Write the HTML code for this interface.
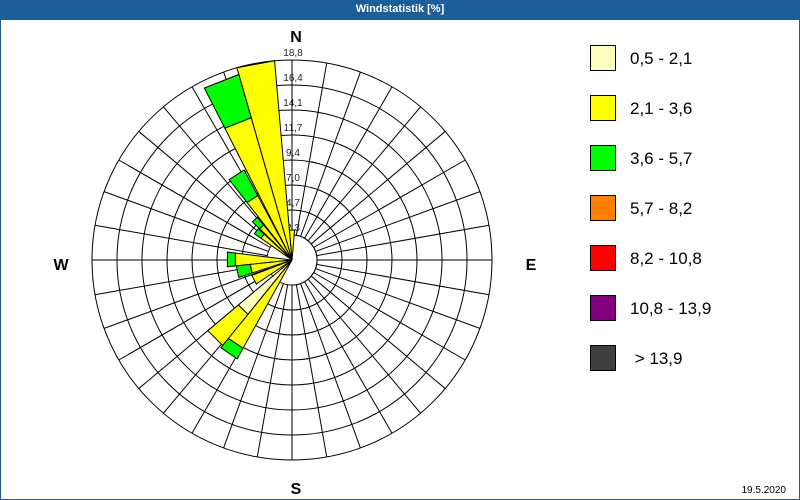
<!DOCTYPE html>
<html><head><meta charset="utf-8"><style>
html,body{margin:0;padding:0;background:#fff;}
#f{position:relative;width:800px;height:500px;overflow:hidden;font-family:"Liberation Sans",sans-serif;}
#t{position:absolute;left:0;top:0;width:800px;height:20px;background:#1e5e98;color:#fff;font-weight:bold;font-size:11px;line-height:19px;text-align:center;}
#b{position:absolute;left:0;top:0;width:798px;height:498px;border:1px solid #1e5e98;}
.lg{position:absolute;left:590px;width:24px;height:24px;border:1px solid #000;}
.lt{position:absolute;left:630px;font-size:17px;color:#000;}
#d{position:absolute;right:14px;top:485px;font-size:10px;}
</style></head><body><div id="f">
<div id="b"></div>
<div id="t">Windstatistik [%]</div>
<svg id="s" width="800" height="500" style="position:absolute;left:0;top:0">
<g id="g"></g>
<text x="296" y="42" font-family="Liberation Sans" font-weight="bold" font-size="16" text-anchor="middle">N</text>
<text x="296" y="494" font-family="Liberation Sans" font-weight="bold" font-size="16" text-anchor="middle">S</text>
<text x="61" y="270" font-family="Liberation Sans" font-weight="bold" font-size="16" text-anchor="middle">W</text>
<text x="531" y="270" font-family="Liberation Sans" font-weight="bold" font-size="16" text-anchor="middle">E</text>
</svg>
<div class="lg" style="top:45px;background:#ffffc0"></div><div class="lt" style="top:49px">0,5 - 2,1</div>
<div class="lg" style="top:95px;background:#ffff00"></div><div class="lt" style="top:99px">2,1 - 3,6</div>
<div class="lg" style="top:145px;background:#00ff00"></div><div class="lt" style="top:149px">3,6 - 5,7</div>
<div class="lg" style="top:195px;background:#ff8000"></div><div class="lt" style="top:199px">5,7 - 8,2</div>
<div class="lg" style="top:245px;background:#ff0000"></div><div class="lt" style="top:249px">8,2 - 10,8</div>
<div class="lg" style="top:295px;background:#800080"></div><div class="lt" style="top:299px">10,8 - 13,9</div>
<div class="lg" style="top:345px;background:#404040"></div><div class="lt" style="top:349px">&nbsp;&gt; 13,9</div>
<div id="d">19.5.2020</div>
</div>
<script>
var cx=292,cy=260,h='';
function P(a,r){a=a*Math.PI/180;return [cx+r*Math.sin(a),cy-r*Math.cos(a)];}
for(var k=1;k<=8;k++)h+='<circle cx="'+cx+'" cy="'+cy+'" r="'+(25*k)+'" fill="none" stroke="#000" stroke-width="1"/>';
for(var a=0;a<360;a+=10){var p=P(a,25),q=P(a,200);h+='<line x1="'+p[0]+'" y1="'+p[1]+'" x2="'+q[0]+'" y2="'+q[1]+'" stroke="#000"/>';}
h+='<circle cx="'+cx+'" cy="'+cy+'" r="24.5" fill="#fff" stroke="none"/>';
h+='<path d="M'+cx+' '+(cy-25)+' A25 25 0 0 1 '+cx+' '+(cy+25)+'" fill="none" stroke="#000"/>';
h+='<line x1="'+cx+'" y1="'+cy+'" x2="'+cx+'" y2="60" stroke="#000"/>';
var labs=['2,3','4,7','7,0','9,4','11,7','14,1','16,4','18,8'];
for(var i=0;i<8;i++){var ry=cy-25*(i+1);h+='<text x="293" y="'+(ry-4)+'" font-family="Liberation Sans" font-size="10" fill="#222" text-anchor="middle">'+labs[i]+'</text>';}
function seg(a1,a2,r1,r2,c){var p1=P(a1,r1),p2=P(a2,r1),p3=P(a2,r2),p4=P(a1,r2);
h+='<polygon points="'+p1+' '+p4+' '+p3+' '+p2+'" fill="'+c+'" stroke="#000" stroke-width="1"/>';}
var Y='#ffff00',G='#00ff00',L='#ffffc0';
var bars=[[-5,5,[[30,Y]]],[-16,-5,[[200,Y]]],[-27,-16,[[148,Y],[193,G]]],[-38,-28,[[73,Y],[102,G]]],
[-46,-39,[[45,Y],[55,G]]],[-55,-47,[[38,Y],[46,G]]],[264,277,[[57,Y],[65,G]]],[252,264,[[42,Y],[56,G]]],
[236,249,[[43,Y]]],[219,230,[[70,L],[110,Y]]],[209,219,[[101,Y],[113,G]]]];
bars.forEach(function(b){var r0=0;b[2].forEach(function(s){seg(b[0],b[1],r0,s[0],s[1]);r0=s[0];});});
document.getElementById('g').innerHTML=h;
</script>
</body></html>
